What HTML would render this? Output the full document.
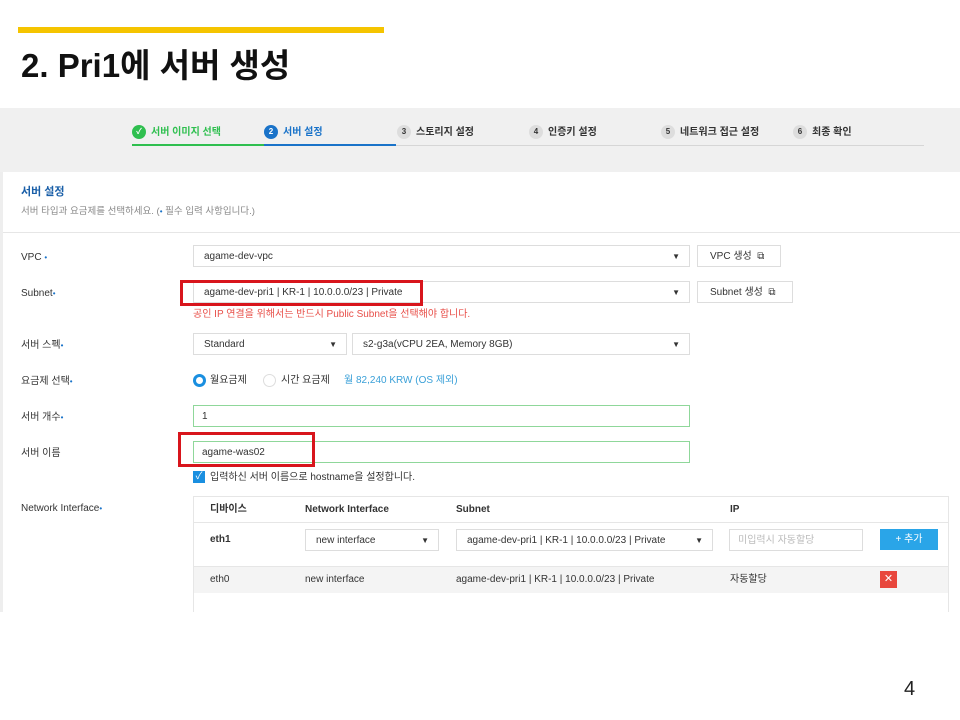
<!DOCTYPE html><html><head><meta charset="utf-8"><style>
body{margin:0;width:960px;height:720px;background:#fff;position:relative;overflow:hidden;font-family:"Liberation Sans Narrow","Liberation Sans","Noto Sans CJK KR",sans-serif;color:#333}
.a{position:absolute;white-space:nowrap;line-height:12px}
.f{font-size:10px}
.box{position:absolute;border:1px solid #ddd;background:#fff;box-sizing:border-box;font-size:10px;line-height:21px;padding-left:10px;white-space:nowrap}
.ar{position:absolute;right:9px;top:0;font-size:8px}
.red{position:absolute;border:3px solid #d8151c;box-sizing:border-box}
.c{display:inline-block;width:14px;height:14px;border-radius:50%;background:#ddd;text-align:center;line-height:14px;font-size:8px;margin-right:5px;vertical-align:middle}
.st{position:absolute;top:123px;font-size:10px;font-weight:bold;white-space:nowrap}
.dot{color:#1a73c9;font-size:8px;vertical-align:top}
</style></head><body>
<div class="a" style="left:18px;top:27px;width:366px;height:6px;background:#f5c400"></div>
<div class="a" style="left:21px;top:47px;font-size:33px;line-height:38px;font-weight:bold;color:#111;font-family:'Liberation Sans','Noto Sans CJK KR',sans-serif">2. Pri1에 서버 생성</div>
<div class="a" style="left:0;top:108px;width:960px;height:64px;background:#f0f0f0"></div>
<div class="a" style="left:132px;top:145px;width:792px;height:1px;background:#d6d6d6"></div>
<div class="a" style="left:132px;top:144px;width:132px;height:2px;background:#2fbf4f"></div>
<div class="a" style="left:264px;top:144px;width:132px;height:2px;background:#1a73c9"></div>
<div class="st" style="left:132px;color:#2fbf4f"><span class="c" style="background:#2fbf4f;color:#fff">✓</span>서버 이미지 선택</div>
<div class="st" style="left:264px;color:#1a73c9"><span class="c" style="background:#1a73c9;color:#fff">2</span>서버 설정</div>
<div class="st" style="left:397px"><span class="c">3</span>스토리지 설정</div>
<div class="st" style="left:529px"><span class="c">4</span>인증키 설정</div>
<div class="st" style="left:661px"><span class="c">5</span>네트워크 접근 설정</div>
<div class="st" style="left:793px"><span class="c">6</span>최종 확인</div>
<div class="a" style="left:0;top:172px;width:3px;height:440px;background:#eee"></div>
<div class="a" style="left:21px;top:186px;font-size:11px;font-weight:bold;color:#1a5fa8">서버 설정</div>
<div class="a" style="left:21px;top:206px;font-size:9.5px;color:#888">서버 타입과 요금제를 선택하세요. (<span class="dot">•</span> 필수 입력 사항입니다.)</div>
<div class="a" style="left:3px;top:232px;width:957px;height:1px;background:#e6e6e6"></div>
<div class="a f" style="left:21px;top:252px">VPC <span class="dot">•</span></div>
<div class="box" style="left:193px;top:245px;width:497px;height:22px">agame-dev-vpc<span class="ar">▼</span></div>
<div class="box" style="left:697px;top:245px;width:84px;height:22px;padding-left:12px">VPC 생성 &nbsp;⧉</div>
<div class="a f" style="left:21px;top:288px">Subnet<span class="dot">•</span></div>
<div class="box" style="left:193px;top:281px;width:497px;height:22px">agame-dev-pri1 | KR-1 | 10.0.0.0/23 | Private<span class="ar">▼</span></div>
<div class="box" style="left:697px;top:281px;width:96px;height:22px;padding-left:12px">Subnet 생성 &nbsp;⧉</div>
<div class="red" style="left:180px;top:280px;width:243px;height:26px"></div>
<div class="a" style="left:193px;top:309px;font-size:10px;color:#e8504a">공인 IP 연결을 위해서는 반드시 Public Subnet을 선택해야 합니다.</div>
<div class="a f" style="left:21px;top:340px">서버 스펙<span class="dot">•</span></div>
<div class="box" style="left:193px;top:333px;width:154px;height:22px">Standard<span class="ar">▼</span></div>
<div class="box" style="left:352px;top:333px;width:338px;height:22px">s2-g3a(vCPU 2EA, Memory 8GB)<span class="ar">▼</span></div>
<div class="a f" style="left:21px;top:376px">요금제 선택<span class="dot">•</span></div>
<div class="a" style="left:193px;top:374px;width:7px;height:7px;border:3px solid #1a8fe0;border-radius:50%"></div>
<div class="a f" style="left:210px;top:375px">월요금제</div>
<div class="a" style="left:263px;top:374px;width:11px;height:11px;border:1px solid #ddd;border-radius:50%"></div>
<div class="a f" style="left:281px;top:375px">시간 요금제</div>
<div class="a f" style="left:344px;top:375px;color:#3aa0d8">월 82,240 KRW (OS 제외)</div>
<div class="a f" style="left:21px;top:412px">서버 개수<span class="dot">•</span></div>
<div class="box" style="left:193px;top:405px;width:497px;height:22px;border-color:#8fd79a;padding-left:8px">1</div>
<div class="a f" style="left:21px;top:448px">서버 이름</div>
<div class="box" style="left:193px;top:441px;width:497px;height:22px;border-color:#8fd79a;padding-left:8px">agame-was02</div>
<div class="red" style="left:178px;top:432px;width:137px;height:35px"></div>
<div class="a" style="left:193px;top:471px;width:12px;height:12px;background:#1a8fe0;color:#fff;font-size:10px;line-height:12px;text-align:center">✓</div>
<div class="a f" style="left:210px;top:472px">입력하신 서버 이름으로 hostname을 설정합니다.</div>
<div class="a f" style="left:21px;top:503px">Network Interface<span class="dot">•</span></div>
<div class="a" style="left:193px;top:496px;width:756px;height:116px;border:1px solid #e6e6e6;border-bottom:0;box-sizing:border-box"></div>
<div class="a f" style="left:210px;top:504px;font-weight:bold">디바이스</div>
<div class="a f" style="left:305px;top:504px;font-weight:bold">Network Interface</div>
<div class="a f" style="left:456px;top:504px;font-weight:bold">Subnet</div>
<div class="a f" style="left:730px;top:504px;font-weight:bold">IP</div>
<div class="a" style="left:194px;top:522px;width:754px;height:1px;background:#e6e6e6"></div>
<div class="a f" style="left:210px;top:534px;font-weight:bold">eth1</div>
<div class="box" style="left:305px;top:529px;width:134px;height:22px">new interface<span class="ar">▼</span></div>
<div class="box" style="left:456px;top:529px;width:257px;height:22px">agame-dev-pri1 | KR-1 | 10.0.0.0/23 | Private<span class="ar">▼</span></div>
<div class="box" style="left:729px;top:529px;width:134px;height:22px;color:#bbb;padding-left:8px">미입력시 자동할당</div>
<div class="a" style="left:880px;top:529px;width:58px;height:21px;background:#2aa5e8;color:#fff;font-size:10px;line-height:21px;text-align:center">+ 추가</div>
<div class="a" style="left:194px;top:566px;width:754px;height:26px;background:#f4f4f4;border-top:1px solid #e6e6e6"></div>
<div class="a f" style="left:210px;top:574px">eth0</div>
<div class="a f" style="left:305px;top:574px">new interface</div>
<div class="a f" style="left:456px;top:574px">agame-dev-pri1 | KR-1 | 10.0.0.0/23 | Private</div>
<div class="a f" style="left:730px;top:574px">자동할당</div>
<div class="a" style="left:880px;top:571px;width:17px;height:17px;background:#e8473d;color:#fff;font-size:11px;line-height:17px;text-align:center">✕</div>
<div class="a" style="left:904px;top:678px;font-size:20px;line-height:22px;color:#222;font-family:'Liberation Sans',sans-serif">4</div>
</body></html>
